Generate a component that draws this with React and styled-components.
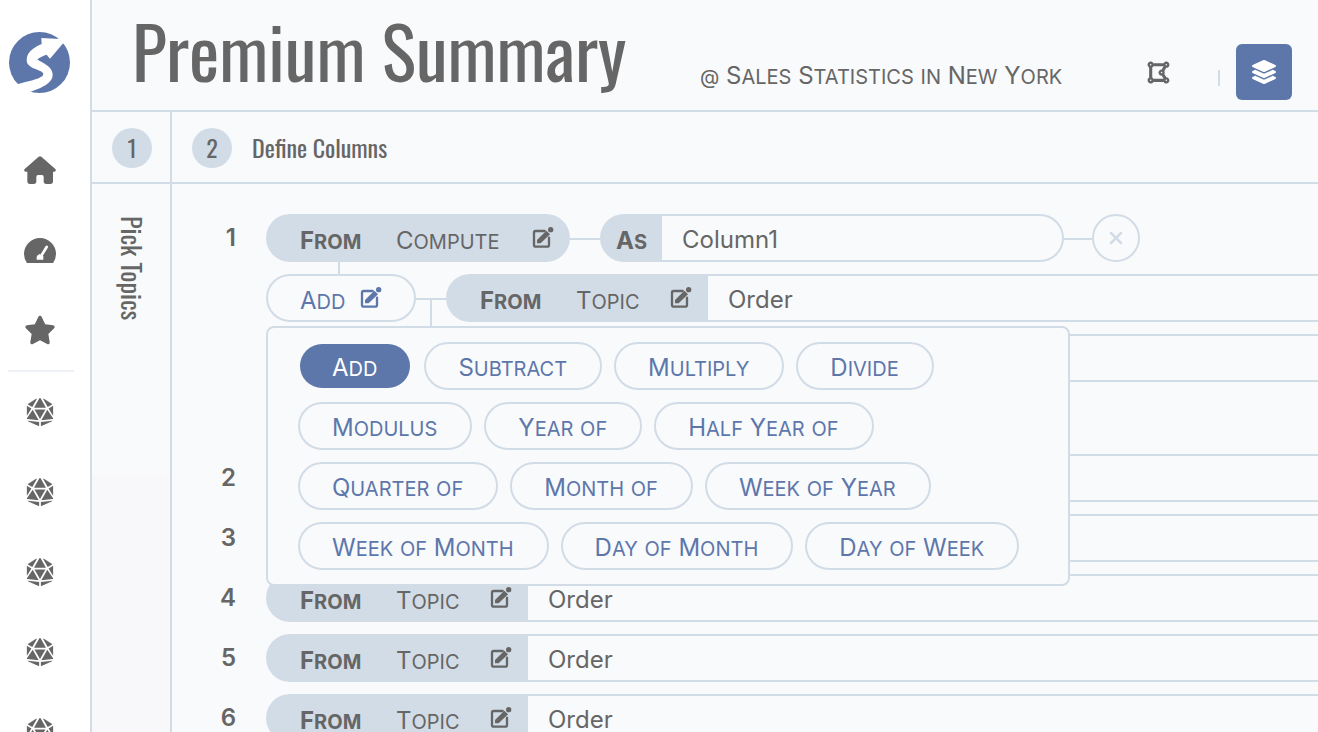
import React, { Fragment } from 'react';
import styled, { createGlobalStyle, css } from 'styled-components';
import { FaDiceD20, FaLayerGroup, FaDrawPolygon } from 'react-icons/fa';
import { FaStar } from 'react-icons/fa6';

const color = {
  bg: '#f9fafc',
  line: '#d2dce6',
  faint: '#edf0f6',
  text: '#666666',
  primary: '#5d77ab',
};
const titleFont = "Oswald, 'Liberation Sans Narrow', 'Liberation Sans', sans-serif";

const GlobalStyle = createGlobalStyle`
  *, *::before, *::after { box-sizing: border-box; }
  body {
    margin: 0;
    background: ${color.bg};
    color: ${color.text};
    font: 400 24px/28px Inter, 'Liberation Sans', sans-serif;
  }
  button, input { font: inherit; color: inherit; margin: 0; }
  button { cursor: pointer; }
  svg { display: block; }
`;

const Page = styled.div`
  display: flex;
  height: 100vh;
  overflow: hidden;
`;

const Sidebar = styled.nav`
  flex: 0 0 92px;
  background: #fff;
  border-right: 2px solid ${color.line};
  overflow: hidden;
`;
const LogoLink = styled.a`
  display: block;
  height: 130px;
  padding: 32px 0 0 9px;
`;
const NavLink = styled.a`
  display: flex;
  width: 80px;
  height: 80px;
  align-items: center;
  justify-content: center;
  color: ${color.text};
`;
const NavSeparator = styled.hr`
  width: 66px;
  height: 2px;
  margin: 0 0 0 8px;
  border: 0;
  background: ${color.faint};
`;

const Main = styled.main`
  flex: 1;
  min-width: 0;
  display: flex;
  flex-direction: column;
`;
const Header = styled.header`
  flex: 0 0 112px;
  display: flex;
  align-items: flex-start;
  padding: 0 26px 0 40px;
  border-bottom: 2px solid ${color.line};
`;
const Title = styled.h1`
  margin: 0;
  flex: 0 0 568px;
  font: 400 72px/100px ${titleFont};
  white-space: nowrap;
`;
const Subtitle = styled.div`
  flex: 1;
  padding-top: 62px;
  white-space: nowrap;
`;
const HeaderTools = styled.div`
  display: flex;
  align-items: center;
  height: 56px;
  margin-top: 44px;
`;
const PlainButton = styled.button`
  display: grid;
  place-items: center;
  width: 56px;
  height: 56px;
  padding: 0;
  border: 0;
  border-radius: 6px;
  background: ${(p) => (p.$active ? color.primary : 'transparent')};
  color: ${(p) => (p.$active ? '#fff' : color.text)};
`;
const ToolDivider = styled.span`
  width: 2px;
  height: 16px;
  margin: 12px 16px 0 32px;
  background: ${color.line};
`;

const Steps = styled.div`
  flex: 1;
  min-height: 0;
  display: grid;
  grid-template-columns: 80px 1fr;
`;
const Step = styled.section`
  min-width: 0;
  border-left: ${(p) => (p.$first ? '0' : `2px solid ${color.line}`)};
  margin-left: ${(p) => (p.$first ? '0' : '-2px')};
  ${(p) => p.$first && css`
    background: linear-gradient(${color.bg} 363px, #f8f8fb 363px);
  `}
`;
const StepHeader = styled.div`
  display: flex;
  align-items: center;
  gap: 20px;
  height: 72px;
  padding: 2px 0 0 20px;
  border-bottom: 2px solid ${color.line};
`;
const StepBadge = styled.span`
  width: 40px;
  height: 40px;
  border-radius: 50%;
  background: ${color.line};
  font: 400 24px/38px ${titleFont};
  text-align: center;
`;
const StepTitle = styled.h2`
  margin: 0;
  padding-bottom: 2px;
  font: 400 24px/36px ${titleFont};
`;
const FoldedStepTitle = styled.h2`
  margin: 32px auto 0;
  width: 80px;
  writing-mode: vertical-rl;
  font: 400 26px/80px ${titleFont};
`;

const ColumnList = styled.ol`
  margin: 0;
  padding: 30px 0 0 40px;
  list-style: none;
  display: flex;
  flex-direction: column;
  gap: 12px;
`;
const ColumnItem = styled.li`
  display: grid;
  grid-template-columns: 54px 1fr;
`;
const Index = styled.span`
  width: 24px;
  text-align: right;
  line-height: 48px;
  font-weight: 600;
`;
const Rows = styled.div`
  min-width: 0;
  display: flex;
  flex-direction: column;
  gap: 12px;
`;
const Row = styled.div`
  position: relative;
  display: flex;
  height: 48px;
`;
const Link = styled.span`
  flex: 0 0 ${(p) => p.$width}px;
  height: 2px;
  margin-top: 24px;
  background: ${color.line};
`;
const Stem = styled.span`
  position: absolute;
  z-index: 1;
  left: ${(p) => p.$left}px;
  top: ${(p) => p.$top}px;
  width: 2px;
  height: ${(p) => p.$height}px;
  background: ${color.line};
`;
const SourceButton = styled.button`
  flex: 0 0 ${(p) => (p.$round ? 304 : 262)}px;
  display: flex;
  align-items: center;
  padding: 6px 16px 0 34px;
  border: 0;
  border-radius: ${(p) => (p.$round ? '24px' : '24px 0 0 24px')};
  background: ${color.line};

  strong { width: 96px; text-align: left; font-weight: 700; }
  svg { margin: 0 0 6px auto; }
`;
const OperatorButton = styled.button`
  flex: 0 0 150px;
  display: flex;
  align-items: center;
  padding: 6px 32px 0 32px;
  border: 2px solid ${color.line};
  border-radius: 24px;
  background: ${color.bg};
  color: ${color.primary};

  svg { margin: 0 0 6px auto; }
`;
const NameLabel = styled.label`
  flex: 0 0 62px;
  padding: 13px 0 0 16px;
  border-radius: 24px 0 0 24px;
  background: ${color.line};
  font-weight: 700;
`;
const TextInput = styled.input`
  min-width: 0;
  height: 48px;
  padding: 4px 20px 2px;
  background: ${color.bg};
  border: 2px solid ${color.line};
  border-left: 0;
  outline: 0;
  ${(p) => (p.$round
    ? css`flex: 0 0 402px; border-radius: 0 24px 24px 0;`
    : css`flex: 1; border-right: 0;`)}
`;
const RemoveButton = styled.button`
  flex: 0 0 48px;
  display: grid;
  place-items: center;
  padding: 0;
  border: 2px solid ${color.line};
  border-radius: 50%;
  background: ${color.bg};
  color: ${color.line};
`;
const OperatorMenu = styled.div`
  position: absolute;
  z-index: 2;
  left: 0;
  top: 52px;
  width: 804px;
  display: flex;
  flex-wrap: wrap;
  gap: 12px;
  padding: 14px 30px;
  border: 2px solid ${color.line};
  border-radius: 8px;
  background: ${color.bg};
`;
const OperatorOption = styled.button`
  height: 48px;
  padding: 5px 33px 0 32px;
  border: 2px solid ${(p) => (p.$selected ? 'transparent' : color.line)};
  border-radius: 24px;
  background: ${(p) => (p.$selected ? color.primary : color.bg)};
  background-clip: padding-box;
  color: ${(p) => (p.$selected ? '#fff' : color.primary)};
  white-space: nowrap;
`;

const Word = styled.span`
  display: inline-block;
  font-size: 20px;
  text-transform: uppercase;
  &::first-letter { font-size: ${(p) => (p.$capital ? 24 : 20)}px; }
`;

function SmallCaps({ children }) {
  return (
    <span>
      {children.split(' ').map((word, i) => (
        <Fragment key={i}>
          {i > 0 && ' '}
          <Word $capital={word[0] !== word[0].toLowerCase()}>{word}</Word>
        </Fragment>
      ))}
    </span>
  );
}

function Logo() {
  return (
    <svg width="61" height="61" viewBox="0 0 183 183">
      <circle cx="91.5" cy="91.5" r="91.5" fill={color.primary} />
      <path
        fill="#fff"
        d="M97 18L152 21L163 33L123 80L113 68C104 71 92 76 85 82C96 92 131 102 131 128C131 154 96 168 65 179L50 183L18 164L27 156C60 147 102 140 103 126C103 112 53 113 53 84C53 60 75 46 98 36Z"
      />
    </svg>
  );
}

function HomeIcon() {
  return (
    <svg width="32" height="28" viewBox="0 0 96 84" fill="currentColor">
      <path d="M44 2Q48-1 52 2L94 39Q96 41 95 44Q94 47 91 47H87V76Q87 84 79 84H67Q59 84 59 76V62Q59 57 54 57H42Q37 57 37 62V76Q37 84 29 84H18Q10 84 10 76V47H5Q2 47 1 44Q0 41 2 39Z" />
    </svg>
  );
}

function GaugeIcon() {
  return (
    <svg width="32" height="25" viewBox="0 0 96 75">
      <path fill="currentColor" d="M9 75Q0 62 0 48A48 48 0 0 1 96 48Q96 62 87 75Z" />
      <path d="M68 27L52 53" stroke="#fff" strokeWidth="8" strokeLinecap="round" />
      <path fill="#fff" d="M46 48L58 54V65H38V57Q38 52 43 51Z" />
    </svg>
  );
}

function EditIcon() {
  return (
    <svg width="22" height="22" viewBox="0 0 66 66">
      <path
        d="M38 12H11Q6 12 6 17V54Q6 59 11 59H46Q51 59 51 54V32"
        fill="none" stroke="currentColor" strokeWidth="7" strokeLinecap="round"
      />
      <path d="M15 49V39L43 11L54 22L26 49Z" fill="currentColor" />
      <circle cx="56" cy="8" r="8" fill="currentColor" />
    </svg>
  );
}

function CrossIcon() {
  return (
    <svg width="14" height="14" viewBox="0 0 14 14" stroke="currentColor" strokeWidth="2.5" strokeLinecap="round">
      <path d="M2 2L12 12M12 2L2 12" />
    </svg>
  );
}

function Source({ type, round }) {
  return (
    <SourceButton type="button" $round={round}>
      <strong><SmallCaps>From</SmallCaps></strong>
      <SmallCaps>{type}</SmallCaps>
      <EditIcon />
    </SourceButton>
  );
}

function TopicRow({ label, topic }) {
  return (
    <Row>
      {topic && <Source type="Topic" />}
      <TextInput aria-label={label} defaultValue={topic} />
    </Row>
  );
}

const operators = [
  'Add', 'Subtract', 'Multiply', 'Divide', 'Modulus', 'Year of', 'Half Year of',
  'Quarter of', 'Month of', 'Week of Year', 'Week of Month', 'Day of Month', 'Day of Week',
];

const columns = [
  { index: 2 },
  { index: 3 },
  { index: 4, topic: 'Order' },
  { index: 5, topic: 'Order' },
  { index: 6, topic: 'Order' },
];

function ComputedColumn() {
  return (
    <Rows>
      <Row>
        <Source type="Compute" round />
        <Stem $left={72} $top={48} $height={12} />
        <Link $width={30} />
        <NameLabel htmlFor="alias"><SmallCaps>As</SmallCaps></NameLabel>
        <TextInput id="alias" $round defaultValue="Column1" />
        <Link $width={28} />
        <RemoveButton type="button" aria-label="Remove column"><CrossIcon /></RemoveButton>
      </Row>
      <Row>
        <OperatorButton type="button">
          <SmallCaps>Add</SmallCaps>
          <EditIcon />
        </OperatorButton>
        <Link $width={30} />
        <Stem $left={164} $top={24} $height={28} />
        <Source type="Topic" />
        <TextInput aria-label="First operand" defaultValue="Order" />
        <OperatorMenu>
          {operators.map((name) => (
            <OperatorOption key={name} type="button" $selected={name === 'Add'}>
              <SmallCaps>{name}</SmallCaps>
            </OperatorOption>
          ))}
        </OperatorMenu>
      </Row>
      <TopicRow label="Second operand" />
      <Row />
    </Rows>
  );
}

export default function App() {
  return (
    <Page>
      <GlobalStyle />
      <Sidebar>
        <LogoLink href="#" aria-label="Start"><Logo /></LogoLink>
        <NavLink href="#home" aria-label="Home"><HomeIcon /></NavLink>
        <NavLink href="#dashboards" aria-label="Dashboards"><GaugeIcon /></NavLink>
        <NavLink href="#favorites" aria-label="Favorites"><FaStar size={32} /></NavLink>
        <NavSeparator />
        {[1, 2, 3, 4, 5].map((n) => (
          <NavLink key={n} href={`#space-${n}`} aria-label={`Space ${n}`}><FaDiceD20 size={28} /></NavLink>
        ))}
      </Sidebar>
      <Main>
        <Header>
          <Title>Premium Summary</Title>
          <Subtitle><SmallCaps>@ Sales Statistics in New York</SmallCaps></Subtitle>
          <HeaderTools>
            <PlainButton type="button" aria-label="Shape"><FaDrawPolygon size={25} /></PlainButton>
            <ToolDivider />
            <PlainButton type="button" aria-label="Layers" $active><FaLayerGroup size={24} /></PlainButton>
          </HeaderTools>
        </Header>
        <Steps>
          <Step $first>
            <StepHeader><StepBadge>1</StepBadge></StepHeader>
            <FoldedStepTitle>Pick Topics</FoldedStepTitle>
          </Step>
          <Step>
            <StepHeader>
              <StepBadge>2</StepBadge>
              <StepTitle>Define Columns</StepTitle>
            </StepHeader>
            <ColumnList>
              <ColumnItem><Index>1</Index><ComputedColumn /></ColumnItem>
              {columns.map(({ index, topic }) => (
                <ColumnItem key={index}>
                  <Index>{index}</Index>
                  <TopicRow label={`Column ${index}`} topic={topic} />
                </ColumnItem>
              ))}
            </ColumnList>
          </Step>
        </Steps>
      </Main>
    </Page>
  );
}
